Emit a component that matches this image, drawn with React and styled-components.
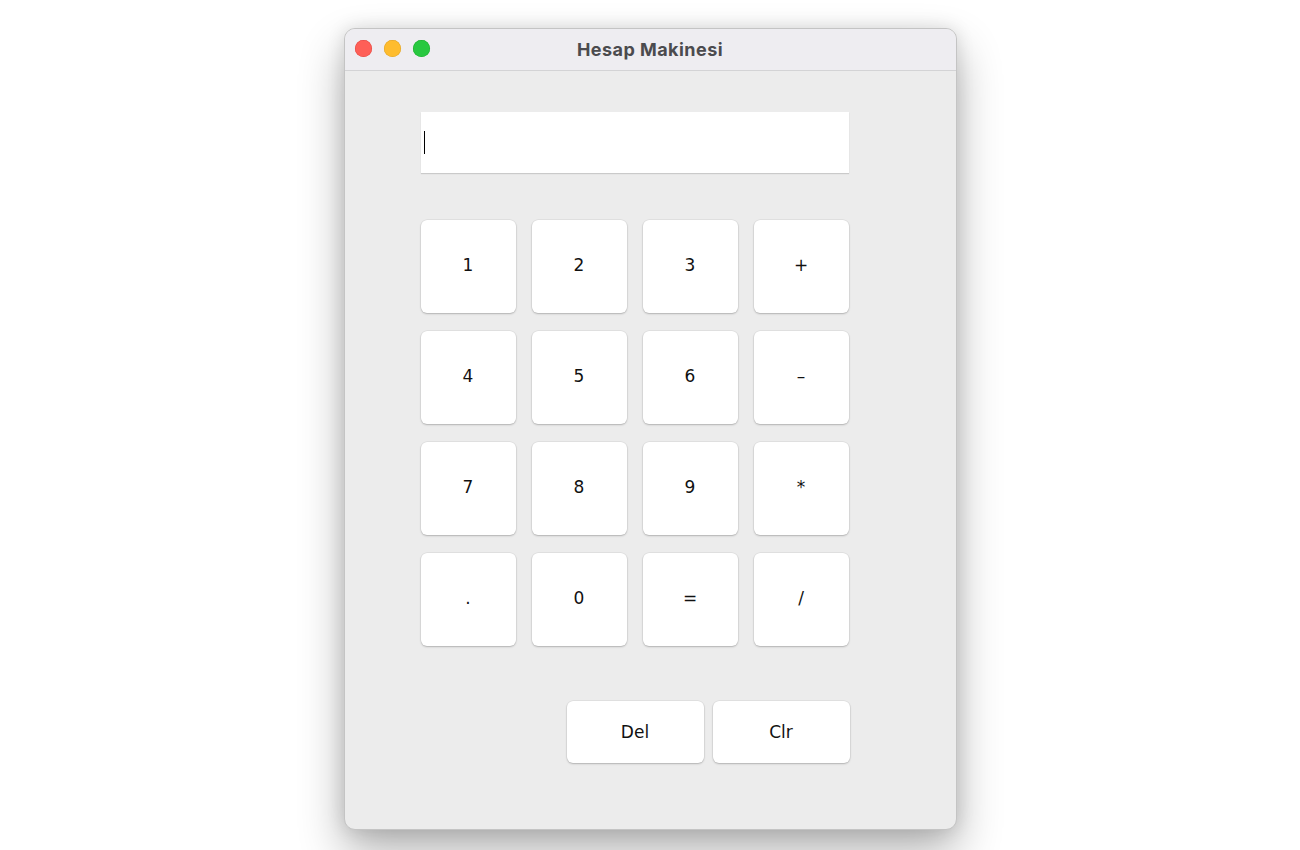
import React from "react";
import styled, { createGlobalStyle } from "styled-components";

const KEYS = ["1", "2", "3", "+", "4", "5", "6", "-", "7", "8", "9", "*", ".", "0", "=", "/"];

const GlobalStyle = createGlobalStyle`
  html, body {
    margin: 0;
    padding: 0;
    background: #ffffff;
  }
  body {
    font-family: "DejaVu Sans", "Liberation Sans", sans-serif;
  }
`;

const App = () => {
  return (
    <>
      <GlobalStyle />
      <Stage>
        <Window>
          <TitleBar>
            <Lights>
              <Light color="#fe5f57" border="#e0443e" />
              <Light color="#febc2e" border="#dea123" />
              <Light color="#28c840" border="#1aab29" />
            </Lights>
            <Title>Hesap Makinesi</Title>
          </TitleBar>
          <Content>
            <Display>
              <Caret />
            </Display>
            <Keypad>
              {KEYS.map((k) => (
                <Key key={k}>{k === "-" ? "–" : k}</Key>
              ))}
            </Keypad>
            <Actions>
              <ActionButton>Del</ActionButton>
              <ActionButton>Clr</ActionButton>
            </Actions>
          </Content>
        </Window>
      </Stage>
    </>
  );
};

const Stage = styled.div`
  display: flex;
  justify-content: center;
  padding-top: 28px;
  height: 850px;
  box-sizing: border-box;
`;

const Window = styled.div`
  width: 613px;
  height: 802px;
  box-sizing: border-box;
  background: #ececec;
  border: 1px solid #c4c4c4;
  border-radius: 11px;
  box-shadow: 0 22px 45px rgba(0, 0, 0, 0.3), 0 0 18px rgba(0, 0, 0, 0.12);
  overflow: hidden;
  display: flex;
  flex-direction: column;
`;

const TitleBar = styled.div`
  position: relative;
  height: 41px;
  flex-shrink: 0;
  background: #eeedf1;
  border-bottom: 1px solid #d3d3d5;
  display: flex;
  align-items: center;
  justify-content: center;
`;

const Lights = styled.div`
  position: absolute;
  left: 10px;
  top: 11px;
  display: flex;
  gap: 12px;
`;

const Light = styled.span`
  width: 17px;
  height: 17px;
  border-radius: 50%;
  background: ${(p) => p.color};
  box-shadow: inset 0 0 0 0.5px ${(p) => p.border};
`;

const Title = styled.div`
  font-family: "Inter", "Liberation Sans", sans-serif;
  font-weight: 700;
  font-size: 18px;
  color: #4b4b4e;
  letter-spacing: 0.45px;
  margin-top: -1px;
`;

const Content = styled.div`
  display: flex;
  flex-direction: column;
  padding: 41px 0 0 76px;
`;

const Display = styled.div`
  width: 428px;
  height: 61px;
  background: #ffffff;
  box-shadow: 0 1px 1px rgba(0, 0, 0, 0.14);
  display: flex;
  align-items: center;
  padding-left: 3px;
  box-sizing: border-box;
`;

const Caret = styled.span`
  width: 1.5px;
  height: 23px;
  background: #000;
`;

const Keypad = styled.div`
  margin-top: 47px;
  width: 428px;
  display: grid;
  grid-template-columns: repeat(4, 95px);
  grid-auto-rows: 93px;
  column-gap: 16px;
  row-gap: 18px;
`;

const Key = styled.button`
  border: none;
  background: #ffffff;
  border-radius: 6px;
  box-shadow: 0 0 0 0.5px rgba(0, 0, 0, 0.08), 0 1px 2px rgba(0, 0, 0, 0.22);
  font-family: "DejaVu Sans", "Liberation Sans", sans-serif;
  font-size: 17px;
  color: #111;
  padding: 0 0 3px;
  cursor: pointer;
`;

const Actions = styled.div`
  margin-top: 55px;
  width: 429px;
  display: flex;
  justify-content: flex-end;
  gap: 9px;
`;

const ActionButton = styled(Key)`
  width: 137px;
  height: 62px;
  padding: 0;
`;

export default App;
